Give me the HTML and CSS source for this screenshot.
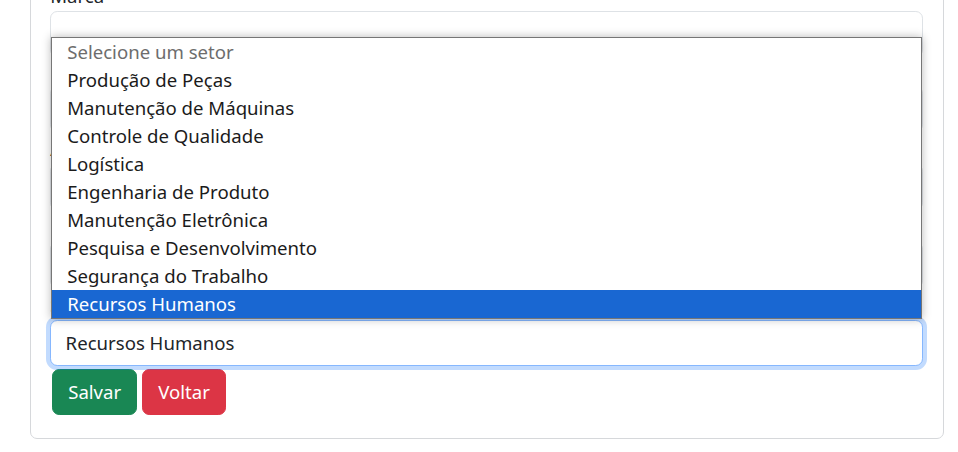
FILE: index.html
```
<!DOCTYPE html>
<html lang="pt-BR">
<head>
<meta charset="utf-8">
<title>Editar</title>
<link rel="stylesheet" href="styles.css">
</head>
<body>
<div class="page">
  <div class="card">
    <form class="form">
      <div class="field">
        <label class="label">Marca</label>
        <input class="control" type="text" value="">
      </div>
      <div class="field">
        <label class="label">Modelo</label>
        <input class="control" type="text" value="">
      </div>
      <div class="field">
        <label class="label">Ano</label>
        <input class="control" type="text" value="">
      </div>
      <div class="field">
        <label class="label">Placa</label>
        <input class="control" type="text" value="">
      </div>
      <div class="field">
        <label class="label">Setor</label>
        <div class="select-wrap">
          <div class="control select focused">Recursos Humanos</div>
          <ul class="popup">
            <li class="opt placeholder">Selecione um setor</li>
            <li class="opt">Produção de Peças</li>
            <li class="opt">Manutenção de Máquinas</li>
            <li class="opt">Controle de Qualidade</li>
            <li class="opt">Logística</li>
            <li class="opt">Engenharia de Produto</li>
            <li class="opt">Manutenção Eletrônica</li>
            <li class="opt">Pesquisa e Desenvolvimento</li>
            <li class="opt">Segurança do Trabalho</li>
            <li class="opt selected">Recursos Humanos</li>
          </ul>
        </div>
      </div>
      <div class="actions">
        <button type="button" class="btn btn-save">Salvar</button>
        <button type="button" class="btn btn-back">Voltar</button>
      </div>
    </form>
  </div>
</div>
</body>
</html>
```
FILE: styles.css
```
* { box-sizing: border-box; }
html, body { margin: 0; padding: 0; background: #fff; }
body {
  font-family: "Noto Sans", "Open Sans", sans-serif;
  font-size: 18.6px;
  line-height: 1.5;
  color: #212529;
  overflow: hidden;
}
.page {
  padding: 0 14px 0 30px;
}
.card {
  margin-top: -40px;
  border: 1px solid #d6d8db;
  border-radius: 7px;
  padding: 21.2px 19.6px 20px 19.2px;
}
.form { display: flex; flex-direction: column; }
.field { display: flex; flex-direction: column; margin-bottom: 3.2px; }
.field:first-child { margin-bottom: 0; }
.label { display: block; height: 28.8px; line-height: 28.8px; }
.control {
  display: block;
  width: 100%;
  height: 46px;
  padding: 7.2px 14.4px;
  font: inherit;
  color: #212529;
  background: #fff;
  border: 1px solid #dee2e6;
  border-radius: 7.2px;
  outline: none;
}
.select { line-height: 30px; }
.focused {
  border-color: #86b7fe;
  box-shadow: 0 0 0 4px rgba(13, 110, 253, 0.25);
}
.select-wrap { position: relative; }
.popup {
  position: absolute;
  left: 1px;
  right: 1px;
  bottom: calc(100% + 1px);
  margin: 0;
  padding: 0;
  list-style: none;
  background: #fff;
  border: 1px solid #767676;
  box-shadow: 0 0 9px rgba(0, 0, 0, 0.28);
  z-index: 5;
}
.opt {
  height: 28px;
  line-height: 28px;
  padding-left: 15px;
  color: #1b1b1b;
  white-space: nowrap;
}
.opt.placeholder { color: #6d6d6d; }
.opt.selected { background: #1967d2; color: #fff; }
.actions {
  display: flex;
  gap: 5px;
  margin: 0 0 3px 2px;
}
.btn {
  font: inherit;
  line-height: 28.8px;
  height: 46px;
  padding: 7.2px 15px;
  border: 1px solid transparent;
  border-radius: 7.2px;
  color: #fff;
}
.btn-save { background: #198754; border-color: #198754; }
.btn-back { background: #dc3545; border-color: #dc3545; }
```
